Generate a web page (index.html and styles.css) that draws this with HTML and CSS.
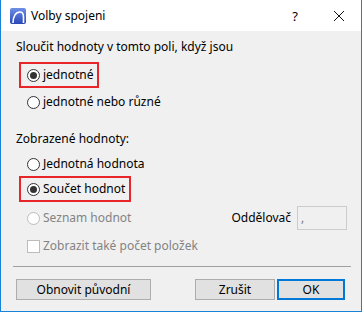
FILE: index.html
```html
<!DOCTYPE html>
<html>
<head>
<meta charset="utf-8">
<link rel="stylesheet" href="styles.css">
</head>
<body>
<div class="window">
  <div class="titlebar">
    <svg class="app-icon" width="16" height="16" viewBox="0 0 16 16">
      <defs>
        <linearGradient id="g" x1="0" y1="0" x2="0" y2="1">
          <stop offset="0" stop-color="#6f8fe6"/>
          <stop offset="1" stop-color="#2a47b8"/>
        </linearGradient>
      </defs>
      <rect x="0" y="0" width="16" height="16" rx="2" fill="url(#g)"/>
      <path d="M3 15 C3 8 6 4 10 4 C12.5 4 13.5 6 13.5 9 L13.5 15" fill="none" stroke="#fff" stroke-width="1.6"/>
    </svg>
    <span class="title">Volby spojeni</span>
    <span class="tb-help">?</span>
    <svg class="tb-close" width="12" height="12" viewBox="0 0 12 12">
      <path d="M1 1 L11 11 M11 1 L1 11" stroke="#111" stroke-width="1"/>
    </svg>
  </div>
  <div class="content">
    <div class="heading">Sloučit hodnoty v tomto poli, když jsou</div>
    <div class="row boxed b1">
      <span class="radio checked"></span><span>jednotné</span>
    </div>
    <div class="row plain r2">
      <span class="radio"></span><span>jednotné nebo různé</span>
    </div>
    <div class="heading second">Zobrazené hodnoty:</div>
    <div class="row plain r3">
      <span class="radio"></span><span>Jednotná hodnota</span>
    </div>
    <div class="row boxed b2">
      <span class="radio checked"></span><span>Součet hodnot</span>
    </div>
    <div class="row plain disabled r5">
      <span class="radio"></span><span>Seznam hodnot</span>
      <span class="spacer"></span>
      <span class="sep-label">Oddělovač</span>
      <span class="sep-input">,</span>
    </div>
    <div class="row plain disabled r6">
      <span class="checkbox"></span><span>Zobrazit také počet položek</span>
    </div>
    <div class="divider"></div>
    <div class="buttons">
      <button class="btn reset">Obnovit původní</button>
      <span class="spacer"></span>
      <button class="btn cancel">Zrušit</button>
      <button class="btn ok">OK</button>
    </div>
  </div>
</div>
</body>
</html>
```

FILE: styles.css
```css
html, body {
  margin: 0;
  padding: 0;
}
body {
  font-family: "Noto Sans", "Open Sans", sans-serif;
  font-size: 12px;
  color: #000;
  background: #fff;
}
.window {
  width: 362px;
  height: 312px;
  box-sizing: border-box;
  border: 1px solid #1883d7;
  border-top: none;
  display: flex;
  flex-direction: column;
  background: #f0f0f0;
}
.titlebar {
  height: 31px;
  background: #fff;
  display: flex;
  align-items: center;
  flex: none;
}
.app-icon {
  margin-left: 9px;
  margin-top: 1px;
}
.title {
  margin-left: 5px;
  font-size: 12px;
  flex: 1;
}
.tb-help {
  font-size: 13px;
  margin-right: 35px;
}
.tb-close {
  margin-right: 16px;
}
.content {
  flex: 1;
  display: flex;
  flex-direction: column;
  padding: 0 10px 0 15px;
}
.heading {
  height: 16px;
  line-height: 16px;
  margin-top: 8px;
  flex: none;
}
.heading.second {
  margin-top: 18px;
}
.row {
  display: flex;
  align-items: center;
  height: 22px;
  line-height: 16px;
  box-sizing: border-box;
  align-self: flex-start;
  flex: none;
}
.row.boxed {
  border: 2px solid #e8262a;
  height: 26px;
  padding: 0 4px 0 6px;
  margin-left: 3px;
}
.row.plain {
  padding-left: 11px;
}
.b1 { margin-top: 7px; }
.r2 { margin-top: 3px; }
.r3 { margin-top: 6px; }
.b2 { margin-top: 1px; }
.r5 { margin-top: 4px; height: 24px; align-self: stretch; margin-right: 4px; }
.r6 { margin-top: 5px; }
.radio {
  width: 11px;
  height: 11px;
  border: 1px solid #333;
  border-radius: 50%;
  background: #fff;
  margin-right: 3px;
  position: relative;
  flex: none;
}
.radio.checked::after {
  content: "";
  position: absolute;
  left: 2px;
  top: 2px;
  width: 7px;
  height: 7px;
  border-radius: 50%;
  background: #333;
}
.checkbox {
  width: 11px;
  height: 11px;
  border: 1px solid #bcbcbc;
  background: #fff;
  margin-right: 3px;
  flex: none;
}
.disabled {
  color: #838383;
}
.disabled .radio {
  border-color: #bcbcbc;
}
.spacer {
  flex: 1;
}
.sep-label {
  color: #000;
  margin-right: 6px;
}
.sep-input {
  border: 1px solid #ccc;
  background: #f0f0f0;
  color: #7a7a7a;
  line-height: 22px;
  padding-left: 3px;
  box-sizing: border-box;
  width: 50px;
  height: 24px;
}
.divider {
  height: 1px;
  background: #a0a0a0;
  margin: 9px 0 0 -3px;
  flex: none;
}
.buttons {
  display: flex;
  margin-top: 12px;
  flex: none;
}
.btn {
  font: inherit;
  font-size: 12px;
  height: 21px;
  background: #e1e1e1;
  border: 1px solid #adadad;
  padding: 0;
  color: #000;
  box-sizing: border-box;
}
.reset { width: 135px; }
.cancel { width: 80px; margin-right: 2px; }
.ok { width: 68px; border: 2px solid #0078d7; margin-right: 6px; }
```
